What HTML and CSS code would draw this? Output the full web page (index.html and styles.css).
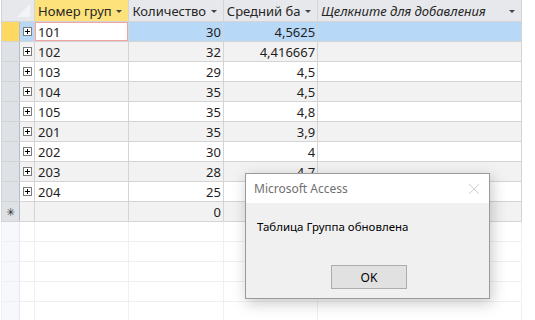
FILE: index.html
```html
<!DOCTYPE html>
<html lang="ru">

<head>
  <meta charset="UTF-8" />
  <meta name="viewport" content="width=device-width, initial-scale=1.0" />
  <title>Группа</title>
  <link rel="stylesheet" href="styles.css">
</head>

<body>
  <div class="sheet">
    <table class="grid">
      <colgroup>
        <col class="c-sel">
        <col class="c-exp">
        <col class="c-num">
        <col class="c-num">
        <col class="c-num">
        <col class="c-add">
      </colgroup>
      <thead>
        <tr>
          <th class="corner" colspan="2"><span class="corner-mark"></span></th>
          <th class="active">Номер груп <span class="arrow"></span></th>
          <th>Количество <span class="arrow"></span></th>
          <th>Средний ба <span class="arrow"></span></th>
          <th class="add">Щелкните для добавления <span class="arrow"></span></th>
        </tr>
      </thead>
      <tbody>
        <tr class="current">
          <td class="sel"></td>
          <td class="exp"><span class="plus"></span></td>
          <td class="focus">101</td>
          <td class="r">30</td>
          <td class="r">4,5625</td>
          <td></td>
        </tr>
        <tr>
          <td class="sel"></td><td class="exp"><span class="plus"></span></td>
          <td>102</td><td class="r">32</td><td class="r">4,416667</td><td></td>
        </tr>
        <tr>
          <td class="sel"></td><td class="exp"><span class="plus"></span></td>
          <td>103</td><td class="r">29</td><td class="r">4,5</td><td></td>
        </tr>
        <tr>
          <td class="sel"></td><td class="exp"><span class="plus"></span></td>
          <td>104</td><td class="r">35</td><td class="r">4,5</td><td></td>
        </tr>
        <tr>
          <td class="sel"></td><td class="exp"><span class="plus"></span></td>
          <td>105</td><td class="r">35</td><td class="r">4,8</td><td></td>
        </tr>
        <tr>
          <td class="sel"></td><td class="exp"><span class="plus"></span></td>
          <td>201</td><td class="r">35</td><td class="r">3,9</td><td></td>
        </tr>
        <tr>
          <td class="sel"></td><td class="exp"><span class="plus"></span></td>
          <td>202</td><td class="r">30</td><td class="r">4</td><td></td>
        </tr>
        <tr>
          <td class="sel"></td><td class="exp"><span class="plus"></span></td>
          <td>203</td><td class="r">28</td><td class="r">4,7</td><td></td>
        </tr>
        <tr>
          <td class="sel"></td><td class="exp"><span class="plus"></span></td>
          <td>204</td><td class="r">25</td><td class="r">4,8</td><td></td>
        </tr>
        <tr class="new">
          <td class="sel star">&#x2733;</td><td class="exp"></td>
          <td></td><td class="r">0</td><td></td><td></td>
        </tr>
        <tr class="empty"><td class="sel"></td><td></td><td></td><td></td><td></td><td></td></tr>
        <tr class="empty"><td class="sel"></td><td></td><td></td><td></td><td></td><td></td></tr>
        <tr class="empty"><td class="sel"></td><td></td><td></td><td></td><td></td><td></td></tr>
        <tr class="empty"><td class="sel"></td><td></td><td></td><td></td><td></td><td></td></tr>
        <tr class="empty"><td class="sel"></td><td></td><td></td><td></td><td></td><td></td></tr>
      </tbody>
    </table>
  </div>

  <!-- Message box -->
  <div class="msgbox">
    <div class="msg-title">
      <span>Microsoft Access</span>
      <svg class="close" width="12" height="12" viewBox="0 0 12 12">
        <path d="M1 1 L11 11 M11 1 L1 11" stroke="#cfcfcf" stroke-width="1" fill="none" />
      </svg>
    </div>
    <div class="msg-body">
      <p class="msg-text">Таблица Группа обновлена</p>
      <div class="msg-buttons">
        <button class="ok">OK</button>
      </div>
    </div>
  </div>
</body>

</html>
```

FILE: styles.css
```css
body {
  margin: 0;
  background-color: #ffffff;
  font-family: "Noto Sans", "Open Sans", sans-serif;
  font-size: 13px;
  color: #1e1e1e;
  overflow: hidden;
}

.sheet {
  padding-left: 1px;
}

.grid {
  border-collapse: collapse;
  table-layout: fixed;
  width: 521px;
  border-left: 1px solid #c8c8c8;
}

.c-sel {
  width: 18px;
}

.c-exp {
  width: 15px;
}

.c-num {
  width: 94px;
}

.c-add {
  width: 203px;
}

.grid th,
.grid td {
  height: 19px;
  padding: 0 3px;
  border: 1px solid #d4d4d4;
  white-space: nowrap;
  overflow: hidden;
  line-height: 18px;
}

.grid th {
  height: 21px;
  background-color: #e7e8ec;
  font-weight: normal;
  text-align: left;
  color: #262626;
  border-top: none;
  position: relative;
}

.grid th.active {
  background-color: #fde17b;
}

.grid th.add {
  font-style: italic;
}

.corner {
  padding: 0;
}

.corner-mark {
  position: absolute;
  right: 4px;
  bottom: 4px;
  width: 0;
  height: 0;
  border-left: 13px solid transparent;
  border-bottom: 13px solid #f3f4f6;
}

.arrow {
  position: absolute;
  right: 6px;
  top: 10px;
  width: 0;
  height: 0;
  border-left: 3px solid transparent;
  border-right: 3px solid transparent;
  border-top: 3px solid #444;
}

.grid td.sel {
  background-color: #dee2e7;
  border-right: 1px solid #b9bcc2;
  padding: 0;
  text-align: center;
}

.grid td.exp {
  padding: 0;
  text-align: center;
}

.plus {
  display: inline-block;
  position: relative;
  width: 7px;
  height: 7px;
  border: 1px solid #7a7a7a;
  background-color: #ffffff;
  vertical-align: middle;
  margin-top: -3px;
}

.plus::before,
.plus::after {
  content: "";
  position: absolute;
  background-color: #000000;
}

.plus::before {
  left: 1px;
  top: 3px;
  width: 5px;
  height: 1px;
}

.plus::after {
  left: 3px;
  top: 1px;
  width: 1px;
  height: 5px;
}

.grid td.r {
  text-align: right;
  padding-right: 2px;
}

.grid tbody tr:nth-child(even) td {
  background-color: #f2f2f2;
}

.grid tbody tr td.sel {
  background-color: #dee2e7;
}

.grid tbody tr.current td {
  background-color: #b7d8f7;
}

.grid tbody tr.current td.sel {
  background-color: #fdd962;
}

.grid tbody tr.current td.focus {
  background-color: #ffffff;
  box-shadow: inset 0 0 0 1px #f4a3a3;
}

.grid td.star {
  font-size: 11px;
  color: #333;
}

.grid tbody tr.empty td {
  background-color: #ffffff;
  border-color: #f0f0f0;
}

.grid tbody tr.empty td.sel {
  background-color: #f7f8fc;
  border-right-color: #e6e7ec;
}

.msgbox {
  position: absolute;
  left: 245px;
  top: 173px;
  width: 243px;
  border: 1px solid #9a9a9a;
  background-color: #f0f0f0;
  box-shadow: 2px 4px 14px rgba(0, 0, 0, 0.22);
  font-family: "Noto Sans", "Open Sans", sans-serif;
  font-size: 11.5px;
}

.msg-title {
  height: 29px;
  background-color: #ffffff;
  display: flex;
  align-items: center;
  justify-content: space-between;
  padding: 0 8px;
  color: #707070;
  font-size: 12px;
}

.close {
  margin-right: 1px;
}

.msg-text {
  margin: 16px 0 0 11px;
  color: #000000;
}

.msg-buttons {
  display: flex;
  justify-content: flex-end;
  padding: 31px 82px 9px 0;
}

.ok {
  width: 76px;
  height: 24px;
  background-color: #e1e1e1;
  border: 1px solid #adadad;
  font-family: inherit;
  font-size: 12px;
  color: #000000;
  padding: 0;
}
```
